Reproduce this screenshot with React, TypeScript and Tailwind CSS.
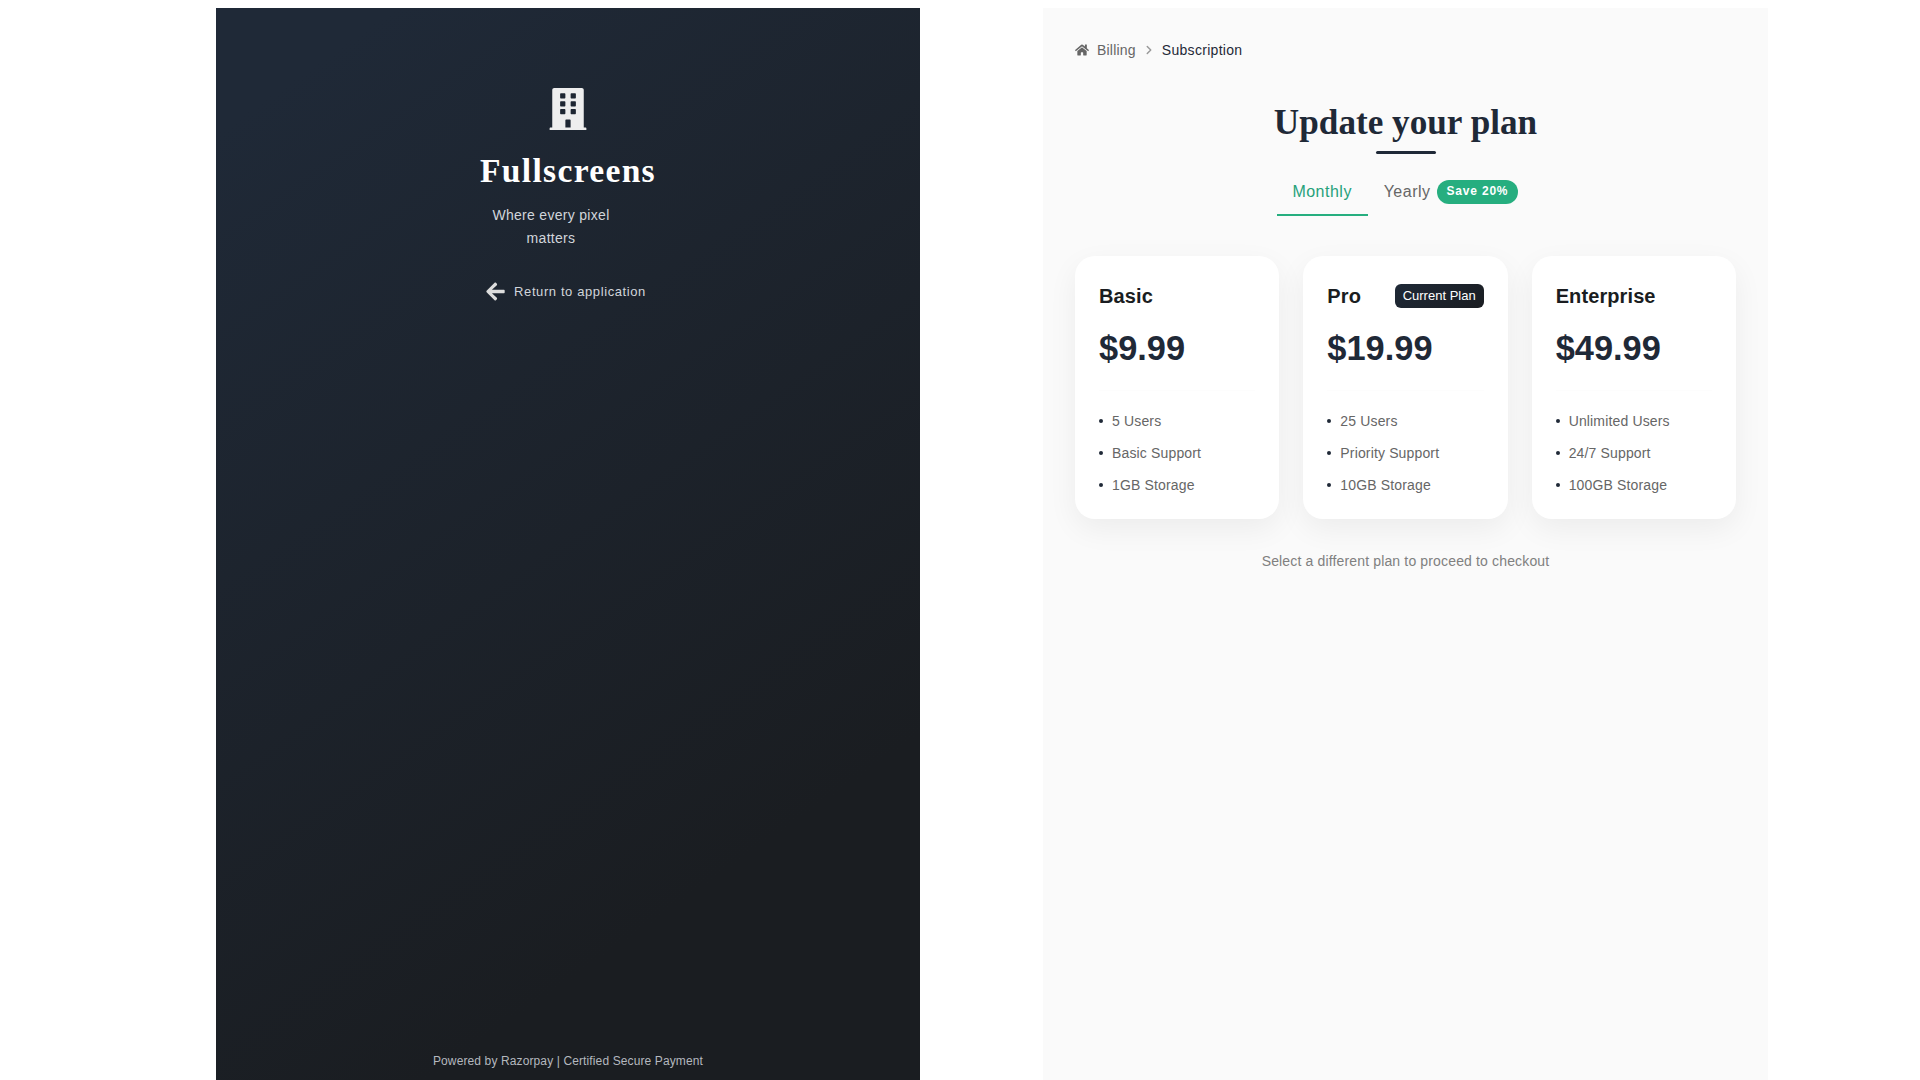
import { FaArrowLeft, FaBuilding, FaHome } from "react-icons/fa";
import { ChevronRight } from "lucide-react";

const plans = [
  { name: "Basic", price: "$9.99", features: ["5 Users", "Basic Support", "1GB Storage"] },
  { name: "Pro", price: "$19.99", current: true, features: ["25 Users", "Priority Support", "10GB Storage"] },
  { name: "Enterprise", price: "$49.99", features: ["Unlimited Users", "24/7 Support", "100GB Storage"] },
];

export default function App() {
  return (
    <div className="h-screen overflow-hidden bg-white pt-2 pl-[216px] flex font-['Liberation_Sans',sans-serif]">
      <aside className="w-[704px] h-[1072px] shrink-0 bg-[linear-gradient(145deg,#1f2937_8%,#1a1d21_78%)] text-white flex flex-col items-center pt-[80px] pb-[10px]">
        <FaBuilding className="text-[42px] text-[#eeeeee]" />
        <h1 className="mt-[17px] text-[33.6px] leading-[48px] font-bold tracking-[1.3px] font-['Liberation_Serif',serif]">Fullscreens</h1>
        <p className="mt-[9px] w-[120px] mr-[34px] text-center text-[14px] leading-[23px] tracking-[0.3px] text-[#d1d5db]">Where every pixel matters</p>
        <a className="mt-[31px] mr-[5px] flex items-center gap-[8px] text-[13px] leading-[20px] tracking-[0.6px] text-[#d1d5db]">
          <FaArrowLeft className="text-[21px] text-[#dddddd]" />
          Return to application
        </a>
        <p className="mt-auto text-[12px] leading-[18px] tracking-[0.12px] text-[#b4b8bf]">Powered by Razorpay | Certified Secure Payment</p>
      </aside>
      <main className="ml-[123px] w-[725px] h-[1072px] shrink-0 bg-[#fafafa] px-[32px] pt-[32px]">
        <nav className="flex items-center h-[20px] text-[14px] tracking-[0.2px] text-[#666666]">
          <FaHome className="text-[14px] text-[#666666]" />
          <span className="ml-[8px]">Billing</span>
          <ChevronRight strokeWidth={2.5} className="mx-[6px] w-[14px] h-[14px] text-[#999999]" />
          <span className="tracking-[0.3px] text-[#1f2937]">Subscription</span>
        </nav>
        <h2 className="mt-[41px] text-center text-[35.2px] leading-[44px] font-bold text-[#1f2937] font-['Liberation_Serif',serif]">Update your plan</h2>
        <div className="mx-auto mt-[6px] w-[60px] h-[3px] rounded-full bg-[#1f2937]" />
        <div className="mt-[22px] pr-[16px] flex justify-center items-start">
          <button className="w-[91px] h-[40px] border-b-2 border-[#26ae7f] text-[16px] tracking-[0.5px] text-[#26a17a] pb-[6px]">Monthly</button>
          <div className="ml-[16px] mt-[4px] h-[24px] flex items-center">
            <span className="text-[16px] tracking-[0.5px] text-[#666666]">Yearly</span>
            <span className="ml-[6px] h-[24px] px-[10px] rounded-full bg-[#26ae7f] text-white text-[12px] font-bold tracking-[0.8px] leading-[23px]">Save 20%</span>
          </div>
        </div>
        <div className="mt-[40px] grid grid-cols-3 gap-[24px]">
          {plans.map((p) => (
            <div key={p.name} className="h-[263px] rounded-[20px] bg-white shadow-[0_10px_30px_rgba(0,0,0,0.06)] px-[24px] pt-[28px]">
              <div className="flex items-center justify-between h-[24px]">
                <h3 className="text-[20px] tracking-[0.1px] font-bold text-[#1a1d21]">{p.name}</h3>
                {p.current && (
                  <span className="h-[24px] px-[8px] rounded-[6px] bg-[linear-gradient(145deg,#1f2937,#1a1d21)] text-white text-[13px] leading-[24px]">Current Plan</span>
                )}
              </div>
              <div className="mt-[20px] text-[34.4px] leading-[40px] font-bold text-[#1f2937]">{p.price}</div>
              <div className="mt-[22px] h-px bg-[#fdfdfd]" />
              <ul className="mt-[14px]">
                {p.features.map((f) => (
                  <li key={f} className="flex items-center h-[32px] text-[14px] tracking-[0.15px] text-[#666666]">
                    <span className="w-[4px] h-[4px] rounded-full bg-[#1f2937] mr-[9px]" />
                    {f}
                  </li>
                ))}
              </ul>
            </div>
          ))}
        </div>
        <p className="mt-[32px] text-center text-[14px] leading-[20px] tracking-[0.15px] text-[#808080]">Select a different plan to proceed to checkout</p>
      </main>
    </div>
  );
}
